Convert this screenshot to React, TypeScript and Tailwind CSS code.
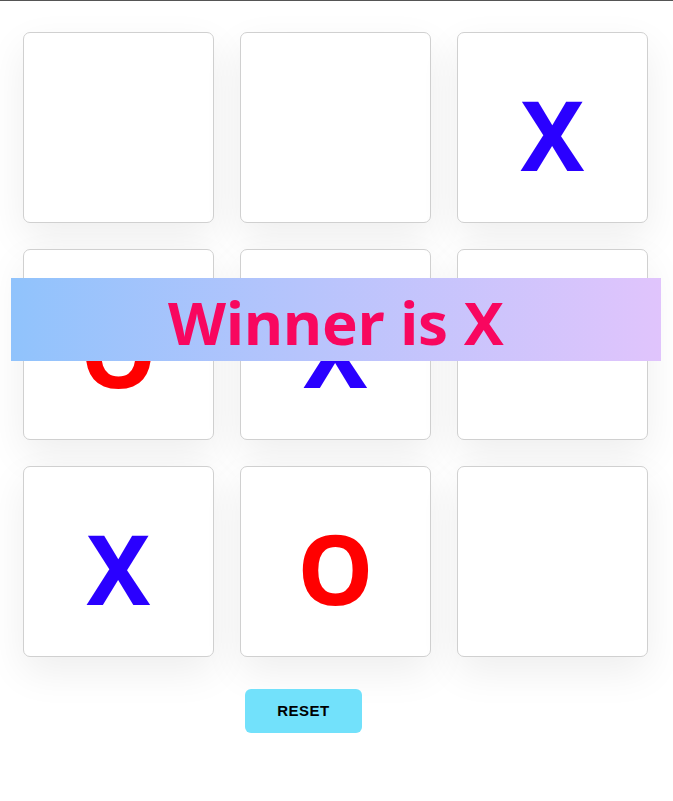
import React from "react";

const board: string[] = ["", "", "X", "O", "X", "", "X", "O", ""];

export default function App() {
  return (
    <div className="min-h-[801px] w-full bg-white border-t border-[#555]" style={{ fontFamily: '"Noto Sans", sans-serif' }}>
      <div className="relative pt-[31px] pl-[23px]">
        <div className="grid grid-cols-[191px_191px_191px] gap-[26px] w-fit">
          {board.map((v, i) => (
            <div
              key={i}
              className="h-[191px] w-[191px] rounded-[7px] border border-[#d0d0d0] bg-white shadow-[0_15px_40px_rgba(0,0,0,0.07)] flex items-center justify-center"
            >
              {v && (
                <span
                  className={`text-[96px] font-bold leading-none pt-[12px] ${v === "X" ? "text-[#2a00ff]" : "text-[#ff0000]"}`}
                >
                  {v}
                </span>
              )}
            </div>
          ))}
        </div>
        <div className="absolute left-[11px] top-[277px] w-[650px] h-[83px] bg-gradient-to-r from-[#90c3fc] to-[#e0c4fc] flex items-center justify-center">
          <span className="text-[60px] font-bold text-[#f8075f] leading-none pt-[4px]">Winner is X</span>
        </div>
        <div className="mt-[32px] ml-[222px]">
          <button className="w-[117px] h-[44px] rounded-[6px] bg-[#72e1fb] text-black font-bold text-[15px] tracking-[0.5px]" style={{ fontFamily: '"Liberation Sans", Arial, sans-serif' }}>
            RESET
          </button>
        </div>
      </div>
    </div>
  );
}
